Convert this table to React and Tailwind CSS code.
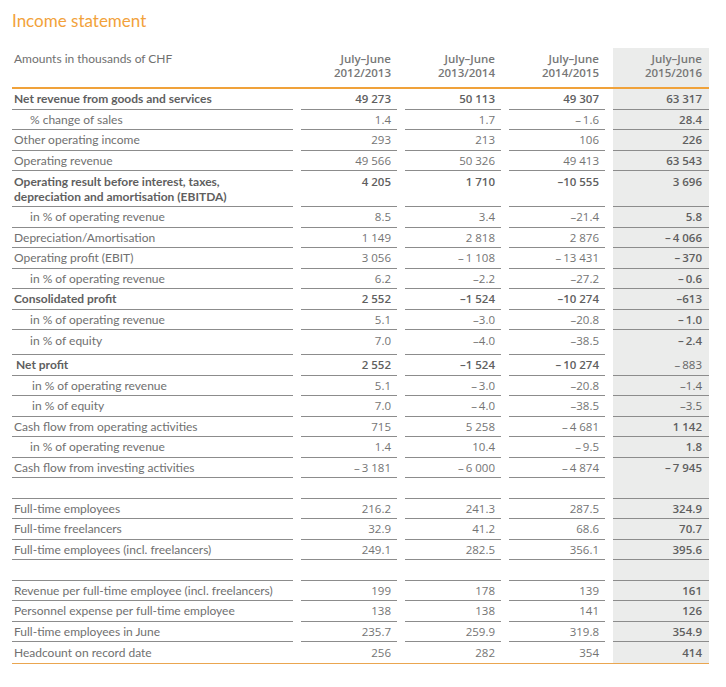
import React from "react";

const rows = [
  { label: "Net revenue from goods and services", bold: true, v: ["49 273", "50 113", "49 307", "63 317"] },
  { label: "% change of sales", indent: 1, v: ["1.4", "1.7", "–\u20091.6", "28.4"] },
  { label: "Other operating income", v: ["293", "213", "106", "226"] },
  { label: "Operating revenue", v: ["49 566", "50 326", "49 413", "63 543"] },
  {
    label: "Operating result before interest, taxes,",
    label2: "depreciation and amortisation (EBITDA)",
    bold: true,
    v: ["4 205", "1 710", "–10 555", "3 696"],
  },
  { label: "in % of operating revenue", indent: 1, v: ["8.5", "3.4", "–21.4", "5.8"] },
  { label: "Depreciation/Amortisation", v: ["1 149", "2 818", "2 876", "–\u20094 066"] },
  { label: "Operating profit (EBIT)", v: ["3 056", "–\u20091 108", "–\u200913 431", "–\u2009370"] },
  { label: "in % of operating revenue", indent: 1, v: ["6.2", "–2.2", "–27.2", "–\u20090.6"] },
  { label: "Consolidated profit", bold: true, v: ["2 552", "–1 524", "–10 274", "–613"] },
  { label: "in % of operating revenue", indent: 1, v: ["5.1", "–3.0", "–20.8", "–\u20091.0"] },
  { label: "in % of equity", indent: 1, tall: true, noLast: true, v: ["7.0", "–4.0", "–38.5", "–\u20092.4"] },
  { label: "Net profit", bold: true, indent: 3, lastSoft: true, v: ["2 552", "–1 524", "–\u200910 274", "–\u2009883"] },
  { label: "in % of operating revenue", indent: 2, lastSoft: true, v: ["5.1", "–\u20093.0", "–20.8", "–1.4"] },
  { label: "in % of equity", indent: 2, lastSoft: true, v: ["7.0", "–\u20094.0", "–38.5", "–3.5"] },
  { label: "Cash flow from operating activities", v: ["715", "5 258", "–\u20094 681", "1 142"] },
  { label: "in % of operating revenue", indent: 1, v: ["1.4", "10.4", "–\u20099.5", "1.8"] },
  { label: "Cash flow from investing activities", noLast: true, v: ["–\u20093 181", "–\u20096 000", "–\u20094 874", "–\u20097 945"] },
  { blank: true },
  { label: "Full-time employees", v: ["216.2", "241.3", "287.5", "324.9"] },
  { label: "Full-time freelancers", v: ["32.9", "41.2", "68.6", "70.7"] },
  { label: "Full-time employees (incl. freelancers)", v: ["249.1", "282.5", "356.1", "395.6"] },
  { blank: true },
  { label: "Revenue per full-time employee (incl. freelancers)", v: ["199", "178", "139", "161"] },
  { label: "Personnel expense per full-time employee", v: ["138", "138", "141", "126"] },
  { label: "Full-time employees in June", v: ["235.7", "259.9", "319.8", "354.9"] },
  { label: "Headcount on record date", last: true, v: ["256", "282", "354", "414"] },
];

const headers = ["2012/2013", "2013/2014", "2014/2015", "2015/2016"];

const indentClass = (i) => {
  if (i === 1) return "pl-[18px]";
  if (i === 2) return "pl-[20px]";
  if (i === 3) return "pl-[4px]";
  return "pl-[2px]";
};

const Row = ({ row }) => {
  const line = row.last ? "" : "border-b border-[#8c8c8c]";
  const height = row.label2 ? "h-[36px]" : row.tall ? "h-[25px]" : "h-[20.5px]";
  const align = row.label2 || row.tall ? "items-start pt-[2.5px]" : "items-center";
  const weight = row.bold ? "font-bold text-[#5f5f5f]" : "text-[#707070]";

  return (
    <div className="grid grid-cols-[281px_96px_96px_96px_96px] gap-x-2">
      <div className={`flex ${align} ${height} ${line} ${indentClass(row.indent)} ${weight}`}>
        {!row.blank && (
          <div className="leading-[15px]">
            <div>{row.label}</div>
            {row.label2 && <div>{row.label2}</div>}
          </div>
        )}
      </div>
      {[0, 1, 2, 3].map((i) => {
        const isLast = i === 3;
        const cellLine = isLast && row.noLast ? "" : line;
        let tone = row.bold ? "font-semibold text-[#5f5f5f]" : "text-[#747474]";
        if (isLast) tone = row.lastSoft ? "text-[#666666]" : "font-semibold text-[#5f5f5f]";
        return (
          <div
            key={i}
            className={`flex ${align} justify-end ${height} ${cellLine} ${tone} font-['Open_Sans',sans-serif] text-[11.5px] ${
              isLast ? "bg-[#ebeceb] pr-[7px]" : "pr-[6px]"
            }`}
          >
            <span className="leading-[15px]">{row.blank ? "" : row.v[i]}</span>
          </div>
        );
      })}
    </div>
  );
};

export default function App() {
  return (
    <div className="bg-white w-[726px] h-[687px] px-3 text-[12px] font-['Lato',sans-serif]">
      <div className="pt-[9px] text-[17px] leading-6 text-[#f2a23b] mb-[15px]">Income statement</div>

      <div className="w-[697px]">
        <div className="grid grid-cols-[281px_96px_96px_96px_96px] gap-x-2 h-[41px] border-b-2 border-[#f0a23a]">
          <div className="pl-[2px] pt-[4px] leading-[14px] text-[#707070]">Amounts in thousands of CHF</div>
          {headers.map((h, i) => (
            <div
              key={h}
              className={`text-right pt-[4px] leading-[14px] font-semibold text-[11.5px] font-['Open_Sans',sans-serif] text-[#777777] ${
                i === 3 ? "bg-[#ebeceb] pr-[7px]" : "pr-[6px]"
              }`}
            >
              <div>July–June</div>
              <div>{h}</div>
            </div>
          ))}
        </div>

        <div className="border-b border-[#eaa650]">
          {rows.map((row, idx) => (
            <Row key={idx} row={row} />
          ))}
        </div>
      </div>
    </div>
  );
}
